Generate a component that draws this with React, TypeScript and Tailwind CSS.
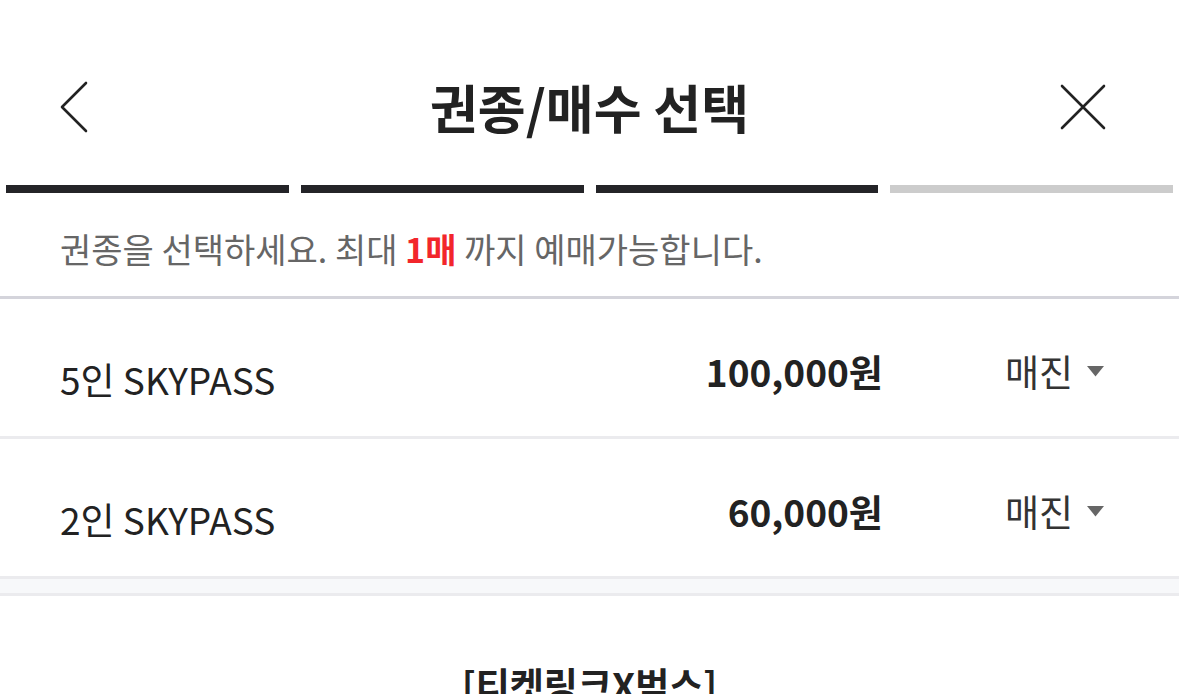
import React from 'react'

const FONT = { fontFamily: '"Noto Sans CJK KR", "Noto Sans", sans-serif' }

type Ticket = { name: string; price: string }

const tickets: Ticket[] = [
  { name: '5인 SKYPASS', price: '100,000원' },
  { name: '2인 SKYPASS', price: '60,000원' },
]

function TicketRow({ ticket }: { ticket: Ticket }) {
  return (
    <div className="flex h-[140px] items-center border-b-[3px] border-[#ebebee] pl-[60px] pr-[75px] pt-2">
      <p className="flex-1 pt-4 text-[37px] leading-none text-[#222]">{ticket.name}</p>
      <p className="text-[37px] font-bold leading-none text-[#222]">{ticket.price}</p>
      <button className="ml-[122px] flex items-center gap-[14px] text-[37px] leading-none text-[#333]">
        매진
        <svg width="17" height="11" viewBox="0 0 17 11">
          <path d="M0 0 H17 L8.5 10.5 Z" fill="#666" />
        </svg>
      </button>
    </div>
  )
}

export default function App() {
  return (
    <main className="min-h-screen w-full overflow-hidden bg-white" style={FONT}>
      {/* Header */}
      <div className="grid h-[185px] grid-cols-[1fr_auto_1fr] items-center pt-[28px]">
        <button className="ml-[59px] w-fit">
          <svg width="30" height="52" viewBox="0 0 30 52" fill="none">
            <path d="M27 2 L3 26 L27 50" stroke="#222" strokeWidth="2.6" strokeLinecap="round" strokeLinejoin="round" />
          </svg>
        </button>
        <h1 className="text-[52px] font-bold leading-none text-[#222]">권종/매수 선택</h1>
        <button className="mr-[73px] justify-self-end">
          <svg width="46" height="46" viewBox="0 0 46 46" fill="none">
            <path d="M2 2 L44 44 M44 2 L2 44" stroke="#222" strokeWidth="2.6" strokeLinecap="round" />
          </svg>
        </button>
      </div>

      {/* Step progress */}
      <div className="flex h-2 gap-3 px-[6px]">
        <div className="flex-1 bg-[#242428]" />
        <div className="flex-1 bg-[#242428]" />
        <div className="flex-1 bg-[#242428]" />
        <div className="flex-1 bg-[#cccccc]" />
      </div>

      {/* Guide */}
      <div className="flex h-[106px] items-center border-b-[3px] border-[#d4d4db] px-[60px] pt-2">
        <p className="text-[34px] leading-none text-[#666]">
          권종을 선택하세요. 최대 <span className="font-bold text-[#f2262b]">1매</span> 까지 예매가능합니다.
        </p>
      </div>

      {/* Ticket list */}
      {tickets.map((t) => (
        <TicketRow key={t.name} ticket={t} />
      ))}

      <div className="h-[17px] border-b-[3px] border-[#ebebee] bg-[#f7f8fa]" />

      {/* Notice */}
      <div className="pt-[70px] text-center">
        <p className="text-[37px] font-bold leading-none text-[#222]">[티켓링크X벅스]</p>
      </div>
    </main>
  )
}
